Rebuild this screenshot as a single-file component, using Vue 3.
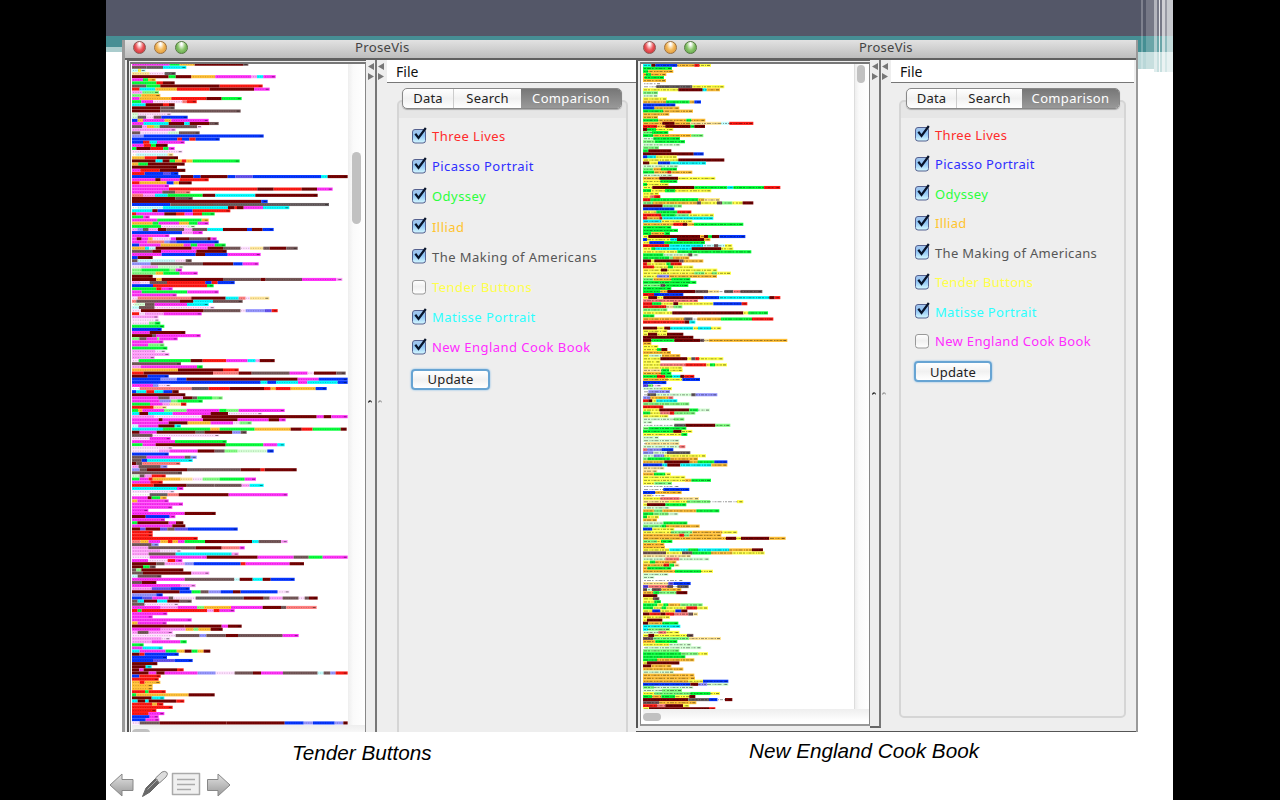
<script setup>
const palette = {
  m: '#ff33f8', k: '#760303', r: '#ff1a14', g: '#08ff3c', b: '#0636ff', c: '#06fcff',
  o: '#ffbf36', y: '#ffff45', a: '#76595a', d: '#6b6264', p: '#ff9dfa', q: '#ffe0ff',
  h: '#ff8080', l: '#84ff84', e: '#d5ffd5', v: '#9696ff', u: '#6655f0', s: '#ffe69a',
  t: '#c8ffff', w: '#ffffff', n: 'none'
}

// Each row lists colour runs with the x at which the run ends, in thirds of a pixel.
const leftBlocks = [
  { x: 97, y: 64.2, n: 3.122, rows: `m210 g240 o285 k430 a446
a140 d190 c260
t115 y125 t138
s150 q195 d228
k207 g228 k275 o347 m455 p472 c491 m528
m130 g145 o168
g170 r190 k225
a140 g182 k360 r489
r120 c167 o232 r330 k463 m510
p128 l178
l125 o182
m120 o215 r320 k366 g426
g125 m160 q248 h262 r291
c138 k190 r208 k225
k182 a225
k182 a423
e115 q150 q215
e114 d140 q162 a185 b264
b114 o130 m195 o215 m327
m132 c207 k254 c270 k330 a357
a128 p142 o163 l180 a293 q307
p228
a122 q205 e238 a300
v132 b492
b233 r247 b269 r288 b360
b130 r150 c172 m255
m132 r154 g169 k204
g110 k153 r191 g207 m225
q249
w110 t170 t204 s221
o135 r172 k235
k168 c189 k210 g226 o247 r260 o279 g420
o116 g145 k255
k232
m122 r180 k257
r135 b190 u212 b236
b243 k281 b303 k384 b407 u459 b664 c684 k744
m167 k183 m240 r327
r120 o201 b222 o238 k276
m208
m208 r473 k522 r606 k652 m699
m188 a226 h272
h130 p166 c204 g309 k347 c467 k654
k227 a279` },
  { x: 37, y: 201.4, n: 3.122, rows: `k425 b444
b152 a280 d628
w54 t130 c325 k345 r352 k372 m430 c509
c98 k114 b219 r332
r49 m134 k169 r195 m220 r247 g285
g71 m90
m113 g246 o267
o99 g117 m178 o208 g234 m267
g125 q203 e227
p53 v70 a87 p115 k140 a193 p218 a263 c310 k382 b397 k429 b462
b187 p219 m249
m149
m51 k66 m86 o99 q153 m169 k208 a263 k273 m291
m83 h134 v150 u170 b297
b59 m123 o192 m213 g233 m285 g318
o76 c88 t108 k216 m264 k310 a363 q391 s431 a450 k500 a534
a98 k124 m230 k321
m126 b228 k256 b324 m423
b54 k99
a54 t105 t167 q198 a216
v93 a250 k341 b369 m417
q65 p115 e191
l65 g150 l168 m187
l108 o131 g180 m234
k99
k110 o126 k310 a423 k438 a547 m650 p668
p62 q90 a142 r257 b276 r294 b345
b100 r262 g282
g110 r126 m159
m66 g203 m297
m171
q54 h215 k318 c357 h378 q391 s449
h50 a181 k221 c280 a369
w44 e76 a105 m202 c267
t58 a105 q285
q64 k252 a363 q378 v436 u456 r474
r59 q76 p132 m246
p116
q119
q88 l105 g122
g134
b126
m90 k197
k97 a109 m243
l59 a81 m112 l119 m174
m131
m86 l134
g143
p107 q138
p149
p105
q57 g213 k249 r320 m384 c408 p420 k465
a184
p64 m232 g249
o175 k310 r357
r72 k280 h357 k396 a510 m564 q583 k650 a678
k84 b147` },
  { x: 37, y: 379.2, n: 3.122, rows: `b123 v172 b200 k534 m597 b684
b423 c443 b469 c535 m563 c654 b684
m100 v117 q153
w60 h216 a267 r330 k433 r453 o468 r513 o588 b621
b50 c80 r104 c131 b158 k177
k197
m116 a150 p190 k219 a233 g277 l309
m120 v154 l173 g249
g91 m129 p150 s184 r200
r102 s141
g55 o68 m133 l201 m299 g321 l357 m495
c59 k86 c159 m273 k325 q428
p104 q246 k591 m612 k635 m684
m117 k129 m250 k354 m447 k478 m498
m147 k204 o273 m340 q360 l396
t56 m116 k165 c184
c130 g272 o300 g405 o513 k546 r579 g663 k681
k60 m111 k228 a254 k338 v363 a381
a99 q299
q90 m153
m166 g321
g69 m108 k318 g431 m473 c495
q120 q159
q118 p150 m234 k285 a315 l354 e443 b462
b147
a81 m195 a213 v231
a66 b82 c219
k50 a68 h182
p57 a123 v143
v60 a82 k202 a363 k423 r435 k531
a187
e60 a75 p96 r138
g60 m87 r99 o183 s219 q249 l300 g375 m409
m92 r129
r102 k201 a285 a366 p390 c432
c172 m191
q123 q165
w90 d144 h177 k327 m504
m84 k96 g122 o141
o53 m147
m190
m158
m86
m195 k288
k78 b150 m167
m136
g53 k147 m169 k191
m158 k197
k61 u78 k121 u143 a165 u205 b354
r99
r99
r234
h62 o87 m122 o145 r159 o175 m195 g256 k397 c417 a484 p504
a96 v117
p86 a228 k306 h360 m375
p121 q185
p87 a168 c336 p357
q90 m246 m261 k414 m522 a567 g609 m684` },
  { x: 37, y: 560.6, n: 3.122, rows: `m85 q144 r167 m188
k110 a135 p195 v222 b363 r378 m510 k553
k70 g90 a108
a50 l65 k191
a70 k215 p269
t54 a125
m195 a344 t360 k399 c429 k453 b525
a66 k110
m183 p228
p96 u152 b210
k180 b216 g243 a267 v303 b340 k363 b474 q510
v110 b129
b69 u98 m147 a161 q228 t222 d372 k432 a450 p489 a537 q555 a568 k594
a54 c73 k112 c143 k180 a216
a75 q177
m123 p174 m232 l253 o334 m429 k484 a500 h591
r54 g66 r262 p282 r300 m345
m143
m99
m216
o54 m141
k195 k306 m325 k366
m123 p198 o222 l236 o273 k309
p54 a87 p159
q168 a240 v260 a318 k355 a489 m537
p126 q152
p96 m182 g201
g72
m69 c129
c60 m138 g171 o195 k216 g234 o252 k272
k60 r75 b177
b142
b100 u165 b219
k113
k78 c96
k59 m72 k172 r192
k87 m110 k135 m234 v288 q345 a400 k424 m490 a594 t612 a632 v648 r684
b59 r123
r117
o60 r75 o122
o99
o99
r76 g87 r138
g50 o207 k285
k96 c134
c54 k76 c87 k170 r194
r97 o112 r131
r159
r110
r87 m134
b90 m117
b78 m119
q60 a120 k145 k320 k495 b552 v580 b645 v671 k684` }
]

const rightBlocks = [
  { x: 68, y: 66.3, n: 3.055, rows: `c93 k105 b171 o222 r238 y272
g155
g84 o159
o77 g92 o138
o72 g131
o137
w122
w108 d216 y312
y174 k247 c259 o299
l113
e113
y140
o137 g208 o222 b242
b165
b102 o177
g129 o218
o147
o113
g114 o198 g213 o255
o126 k163 o210 s302 t327 r399
r111 o135 k211 g222 k254
k80 g107 y159
l95 g144
g99 o213 l249
e99 g179
l104 g194
e180
l116
g84 k153
k220 b250
b80 c107 y170
y174 k312
k87 y113 b150 c257
e174
l99 o122 g170
g102 o141 r153 o216
e117 e156
o117 k173 y285
y120 g171
g80 y145
y96 k222 g321 c339 g431 r480
g95 y136 g164 y272
y116
y90 h119
r92 g234 l253 y299` },
  { x: 38, y: 191.7, n: 3.055, rows: `g62 y104 g135 y243
y72
y60 h72 r90
r60 g204 o222 s269
l68 o200 a212 y260 a275 l306 y337 k369
k97 l155
b132
y78 g141 r183
r93 g136 l176 y251
r50 o87 r96 c176 c249
c94 y186
o129 r158 k171 o191 g339
g123
g143
g63 o102 g119
y54 k209 o221 k233 g245 k267 b345
b50 y120 c140 k221 o240
y57 b102 g224
r117 c219 t251 a264 t284 y306
y63 g75 c184 k273 y309
y141 g363
g100 e174 a186 e204
g116 l128 o177
k62 y72 k147 a160 o219
r50 y108 g121 r154
r71 y113 g129 y189
y92 k111 y261
y192 l223 y245 l260 y302
y80 v116 o260
l69 o123 g180
g198
l90 a105 g174
g123
g90 o111 k195 a233 s267 w282 d309 h330 a396
r71 b159
y54 k81 y99 k220 b267 c417 k433 r450
h203
r65 g93 y129 k144 y249 b334 r351
r108 s130 l156
l111
y126 k339 y354 g413
g72
o129 o162 d187 w201 o272 g365 r429
r163 k177 c195
n38
k80 y102 k120 c189 y203 c242 y273
y90 k90 y111
y53 k81 y110 k159
k189
k63 g132 k210 a222 s236 o471
o63
y84
y80 g93 k111
o122
y57 e95 o150
y90 k171 y183 d195 r207 y279
y90
y90 h165 r228 y239 g254 y290
y156` },
  { x: 38, y: 371.3, n: 3.055, rows: `s93 g117 y157
o92 g123
g80 r105 g126 c150 k162 r192
o114 y156 b209
b108
u54 l68 q93
e93 y125
w54 v119
w51 d77 e183 d196 v261
v60 o114 h129
r54 k66 y78 c141
l177
r99
y87 k177 g204 e239
g60 y90 h119 r132 l195
y114
e131 l162
e66
w132 d165 k255 l300
l54 g168
g129 k154 y186
y153 g171
e86
e147
w45 s147
e147 h165
h51 v94 b129
v69 e110 d180
e71 v102 y227
l53 g120 o203
o102 k178 o202 g252 b291
b96 c111 k150 c243 o291
s102
s81
o71 g105 y122
y165
y164 o183 g242
y72 l125
w147
w99 b177
b75 o154
s66 w105
y90 h148 s206
s114 y170 l240 w320 y339
y50 k105 g168
e117
o72 l96 o198 g267
g68 l114 e144
g50 y86
o80
e99 g171
l93 g107 o208
b66 y132
y122 l186 o276 y321
o147 r162 l177 o273
o287 k318 y332 k417 o466
l80 y92 g126
o102
o104` },
  { x: 38, y: 550.9, n: 3.055, rows: `y117 c174 g203 c297 o365 k398
a107 y155 a186 g242 o306 y403
s182
e105 h147 e237
y59 g75 o138
o100 r117 g131 s147
o51 g123
o134 g212 y248
e114
e72
w159
s114 u129 b181
u54 h111 a128 w141 d175
a50 e65 a93 o153
o69 g87 l138 k171
k81
y68 a87
y72 g92
g81 y99 g114 o150 l217
g69 y94 g108 y168 r200 y233
y66 b90 y135 b153 k171
k57 r90 k105 r132 h174 a188 s203
y119
y50 k96
k54 o96 g144
c150
c54 l119
e84 h108 y147
y54 k72 y170 a189
a69 l177 s272
o75 g141
y117 e183
w45 e213
l147
g152 l204 y233
g165
g80 o192
y50 k147
k63 o123
o159
e131
o192
o194
o174 y218 b294
b180 k204 v231 e294
l72 e189
e95 l155
y72 l180 g241 y269
g66 o93 g135 y177 k195
k174 d236 b262 w284 k306
a87 o198
r80 h105 k158 y177
y56 k236 r255` }
]

function layout(blocks) {
  const out = []
  for (const block of blocks) {
    block.rows.split('\n').forEach((row, i) => {
      let from = 0
      const y = block.y + i * block.n
      const parts = row.trim().split(' ').map((token) => {
        const to = (Number(token.slice(1)) - block.x) / 3
        const part = { x: from, w: Math.max(0, to - from), fill: palette[token[0]] }
        from = Math.max(from, to)
        return part
      })
      out.push({ y, parts, end: from })
    })
  }
  return out
}

function dash(i) {
  return ['3 1 2 1.5 1 1', '2 1 4 1 1.5 2', '1.5 1 2 1 3 1.5', '4 1.5 1 1 2 1'][i % 4]
}

const items = [
  ['Three Lives', '#ff2b2b'],
  ['Picasso Portrait', '#2e2eff'],
  ['Odyssey', '#2bff3c'],
  ['Illiad', '#ffc42e'],
  ['The Making of Americans', '#565656'],
  ['Tender Buttons', '#ffff4a'],
  ['Matisse Portrait', '#2bffff'],
  ['New England Cook Book', '#ff2bff']
]

const windows = [
  { id: 'left', rows: layout(leftBlocks), top: 64, width: 216, height: 661, off: 5 },
  { id: 'right', rows: layout(rightBlocks), top: 65, width: 211, height: 645, off: 7 }
]
</script>

<template>
  <main class="slide">
    <div class="band"></div>
    <div class="stripes"><i v-for="n in 8" :key="n" :class="'stripe s' + n"></i></div>

    <div class="desk">
      <section v-for="win in windows" :key="win.id" class="window" :class="win.id">
        <header class="titlebar">
          <span class="light red"></span><span class="light amber"></span><span class="light green"></span>
          <h1>ProseVis</h1>
        </header>
        <div class="body">
          <div class="viewer">
            <div class="frame">
              <div class="canvas">
                <svg class="rows" :width="win.width" :height="win.height" :viewBox="`0 ${win.top} ${win.width} ${win.height}`">
                  <g v-for="(row, i) in win.rows" :key="i">
                    <rect v-for="(p, j) in row.parts" :key="j" :x="p.x" :y="row.y - 1.55" :width="p.w" height="3.1" :fill="p.fill" />
                    <line v-if="row.end" x1="1" :x2="row.end - 5" :y1="row.y + 0.1" :y2="row.y + 0.1" class="ink" :class="win.id" :stroke-dasharray="win.id === 'left' ? '1 1.4' : dash(i)" />
                    <line v-if="row.end" :x1="row.end - 4" :x2="row.end - 1" :y1="row.y + 0.1" :y2="row.y + 0.1" class="ink tail" />
                  </g>
                </svg>
                <div class="vbar"><b></b></div>
              </div>
              <div class="hbar"><b></b></div>
            </div>
          </div>
          <div class="splitter">
            <svg width="8" height="18" viewBox="0 0 8 18"><path d="M7 1v7L1 4.500z M1 11v7l6-3.500z" /></svg>
            <svg class="grip" width="6" height="5" viewBox="0 0 6 5"><path d="M1 4Q1 1 3 1.200Q5 1 5 4L3.500 2.500z" /></svg>
          </div>
          <div class="splitter second">
            <svg width="8" height="18" viewBox="0 0 8 18"><path d="M7 1v7L1 4.500z M1 11v7l6-3.500z" /></svg>
            <svg class="grip" width="6" height="5" viewBox="0 0 6 5"><path d="M1 4Q1 1 3 1.200Q5 1 5 4L3.500 2.500z" /></svg>
          </div>
          <div class="side">
            <nav class="menu">File</nav>
            <div class="group">
              <div class="tabs"><span>Data</span><span class="mid">Search</span><span class="active">Comparison</span></div>
              <div class="checks">
                <label v-for="(item, i) in items" :key="item[0]" :style="{ color: item[1] }">
                  <svg class="check" width="17" height="20" viewBox="0 0 17 20">
                    <defs>
                      <linearGradient :id="win.id + 'f' + i" x2="0" y2="1">
                        <stop offset="0" :stop-color="i === win.off ? '#fff' : '#a6c6ec'" />
                        <stop offset=".45" :stop-color="i === win.off ? '#f0f0f0' : '#8fc4f5'" />
                        <stop offset="1" :stop-color="i === win.off ? '#fff' : '#d6faff'" />
                      </linearGradient>
                    </defs>
                    <rect x="1.500" y="4.500" width="13" height="13.500" rx="2.500" :fill="`url(#${win.id}f${i})`" :stroke="i === win.off ? '#999' : '#55618f'" />
                    <path v-if="i !== win.off" d="M4.300 8.800L7.500 12.900L14.800 3" fill="none" stroke="#08142b" stroke-width="2.200" />
                  </svg>
                  <span>{{ item[0] }}</span>
                </label>
              </div>
              <button>Update</button>
            </div>
          </div>
        </div>
      </section>
    </div>

    <p class="caption one">Tender Buttons</p>
    <p class="caption two">New England Cook Book</p>

    <svg class="controls" width="124" height="30" viewBox="0 0 124 30">
      <defs>
        <linearGradient id="metal" x2="0" y2="1"><stop offset="0" stop-color="#e2e2e2" /><stop offset="1" stop-color="#999" /></linearGradient>
      </defs>
      <g fill="url(#metal)" stroke="#878787" stroke-width="1" stroke-linejoin="round">
        <path d="M2 15L14 4V9.500H25V20.500H14V26z" />
        <path d="M122 15L110 4V9.500H99.500V20.500H110V26z" />
        <rect x="64.500" y="3.500" width="27" height="21" fill="#f0f0f0" stroke="#aaa" stroke-width="1.500" />
      </g>
      <path d="M69 9.500H87M69 14.500H87M69 19.500H83" stroke="#aaa" stroke-width="1.500" />
      <path d="M34.500 26.500L38 18L50 6L54 10L42 22z" fill="#686868" stroke="#666" stroke-linejoin="round" />
      <path d="M47.500 8L54 2Q57 .5 59 2.500Q60.300 4 58 7L51.500 13z" fill="#dcdcdc" stroke="#888" />
      <path d="M39.500 19.500L50 9" stroke="#aaa" />
    </svg>
  </main>
</template>

<style>
body { background: #000; overflow: hidden; }
</style>
<style scoped>
* { box-sizing: border-box; }
.slide { position: relative; width: 1067px; height: 800px; margin-left: 106px; background: #fff; overflow: hidden; font-family: "Noto Sans", sans-serif; }
.band { position: absolute; inset: 0 0 auto; height: 52px; background: linear-gradient(#545768 0 36px, #468e94 36px 47px, #aacccd 47px); }
.stripes { position: absolute; left: 1031px; top: 0; width: 36px; height: 72px; overflow: hidden; background: linear-gradient(#545768 0 36px, #458f93 36px 52px, #b9d7d8 52px); }
.stripes::before { content: ""; position: absolute; left: 0; top: 69px; width: 17px; height: 3px; background: #fff; }
.stripe { position: absolute; top: 0; height: 72px; background: #fff; }
.s1 { left: 4px; width: 2px; opacity: .25; }
.s2 { left: 9px; width: 8px; opacity: .2; }
.s3 { left: 17px; width: 3px; opacity: .45; }
.s4 { left: 22px; width: 1px; opacity: .8; }
.s5 { left: 25px; width: 3px; opacity: .65; }
.s6 { left: 28px; width: 2px; opacity: .25; }
.s7 { left: 30px; width: 6px; opacity: .6; }
.s8 { left: 17px; width: 19px; opacity: .2; }
.desk { position: absolute; left: 16px; top: 40px; display: flex; width: 1016px; height: 692px; }
.window { display: flex; flex-direction: column; height: 692px; background: #eee; color: #222; overflow: hidden; }
.left { width: 514px; }
.right { width: 502px; border-right: 2px solid #999; }
.window.left { border-left: 3px solid #9a9a9a; }
.titlebar { display: flex; align-items: center; position: relative; flex: none; height: 20px; padding: 0 0 4px 8px; gap: 8px; background: linear-gradient(#e2e2e2, #bdbdbd); border-bottom: 2px solid #606060; }
.right .titlebar { padding-left: 7px; gap: 7.500px; }
.light { width: 13px; height: 13px; border: 1px solid #8a5550; border-radius: 50%; background: radial-gradient(ellipse at 50% 18%, #fff 0 8%, #ee5c60 48%, #d93d42 70%, #ffaca8); }
.amber { border-color: #9c703e; background: radial-gradient(ellipse at 50% 18%, #fff 0 8%, #f3bb60 48%, #e8a443 70%, #ffefaa); }
.green { border-color: #53773f; background: radial-gradient(ellipse at 50% 18%, #fff 0 8%, #90c872 48%, #6fb354 70%, #d6ffb7); }
h1 { position: absolute; left: 230px; top: 0; margin: 0; font-size: 13.2px; line-height: 14px; font-weight: 400; letter-spacing: .25px; color: #444; white-space: nowrap; }
.right h1 { left: 223px; font-size: 13px; }
.body { display: flex; flex: 1; min-height: 0; }
.right .body { border-bottom: 1px solid #555; }
.viewer { flex: none; width: 241px; border-left: 2px solid #555; padding: 1px 0 0 1px; border-top: 1px solid #666; }
.left .viewer { margin-left: 2px; width: 239px; }
.right .viewer { width: 234px; height: 668px; padding-left: 2px; }
.frame { height: 700px; border: 1px solid #888; border-top: 2px solid #777; background: #fff; padding-left: 1px; }
.right .frame { height: 664px; border-bottom: 2px solid #999; padding-left: 2px; }
.canvas { display: flex; height: 661px; }
.right .canvas { height: 645px; }
.rows { display: block; flex: none; }
.ink { stroke: #000; stroke-width: .8; opacity: .24; }
.ink.right { width: auto; opacity: .38; stroke-width: 1; }
.ink.tail { opacity: .5; stroke-width: 1; }
.vbar { flex: 1; background: linear-gradient(90deg, #eee, #fafafa 30%, #fff); padding: 88px 0 0 4px; }
.vbar b { display: block; width: 9px; height: 72px; border-radius: 5px; background: #c1c1c1; }
.right .vbar { padding: 1px 0 0 2px; border-left: 1px solid #ddd; }
.right .vbar b { width: 8px; height: 18px; }
.hbar { height: 15px; padding-top: 4px; background: linear-gradient(#eee, #fff 80%); }
.hbar b { display: block; width: 18px; height: 8px; border-radius: 4px; background: #c1c1c1; }
.splitter { flex: none; position: relative; width: 11px; padding: 2px 0 0 1px; border-right: 2px solid #777; background: #eee; }
.right .splitter { height: 668px; border-bottom: 2px solid #666; }
.splitter svg { display: block; fill: #777; }
.splitter .grip { margin-top: 319px; fill: #222; }
.right .splitter .grip { margin-top: 311px; }
.splitter.second, .right .splitter.second { width: 10px; border: 0; padding-left: 0; }
.splitter.second .grip { fill: #999; }
.side { flex: 1; min-width: 0; }
.menu { height: 23px; border-bottom: 1px solid #777; background: #fff; padding-left: 9px; font-size: 14px; line-height: 23px; color: #111; }
.right .menu { margin-right: 2px; }
.group { position: relative; width: 231px; height: 690px; margin: 17px 0 0 10px; border: 2px solid #d5d5d5; border-radius: 5px; background: linear-gradient(#e6e6e6 0 16px, #eee 16px); }
.right .group { width: 227px; height: 618px; margin-left: 8px; }
.tabs { position: absolute; left: 3px; top: -14px; display: flex; width: 220px; height: 21px; border: 1px solid #888; border-radius: 5px; background: linear-gradient(#fff, #f1f1f1 50%, #fff); box-shadow: 0 1px 1px #aaa; font-size: 13px; line-height: 18px; color: #222; overflow: hidden; }
.right .tabs { left: 5px; width: 214px; }
.tabs span { width: 50px; text-align: center; letter-spacing: .2px; }
.tabs .mid { width: 68px; border-left: 1px solid #ccc; }
.right .tabs span { width: 49px; }
.right .tabs .mid { width: 66px; }
.tabs .active, .right .tabs .active { width: auto; flex: 1; color: #fff; background: linear-gradient(#777, #999); letter-spacing: .35px; }
.checks { padding: 19px 0 0 12px; }
label { display: flex; align-items: center; height: 30.2px; gap: 4px; font-size: 13px; letter-spacing: .45px; white-space: nowrap; }
.right label { height: 29.5px; letter-spacing: .32px; }
.right .checks { padding: 18px 0 0 13px; }
.check { flex: none; margin-top: -3px; width: 17px; }
button { display: block; width: 79px; height: 21px; margin: 6px 0 0 12px; padding: 0; border: 2px solid #67a4d3; border-radius: 4px; background: linear-gradient(#fff, #f1f1f1 50%, #fff); box-shadow: 0 0 2px #70b4e8; font: 13px/16px "Noto Sans", sans-serif; letter-spacing: .2px; color: #222; }
.right button { width: 78px; margin: 5px 0 0 13px; }
.caption { position: absolute; margin: 0; font: italic 20.7px/24px "Liberation Sans", sans-serif; color: #000; white-space: nowrap; }
.one { left: 186px; top: 741px; }
.two { left: 643px; top: 739px; }
.controls { position: absolute; left: 2px; top: 770px; }
</style>
